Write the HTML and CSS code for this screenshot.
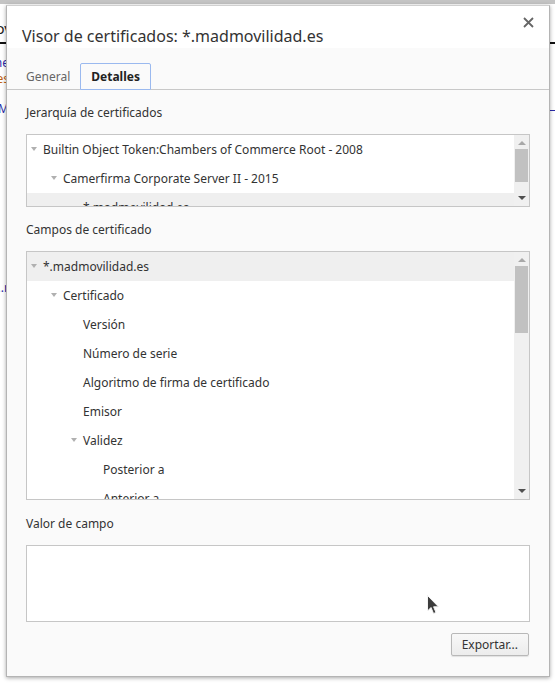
FILE: index.html
```html
<!DOCTYPE html>
<html lang="es">
<head>
    <meta charset="UTF-8">
    <title>Visor de certificados</title>
    <link rel="stylesheet" href="styles.css">
</head>
<body>
    <!-- página de fondo, casi tapada por el diálogo -->
    <div class="page">
        <div class="page-top"></div>
        <div class="page-nav"><span class="nav-left">Nov</span></div>
        <div class="page-side">
            <span class="s-blue l1">me</span>
            <span class="s-orange l2">es</span>
            <span class="s-blue l3">M</span>
            <span class="s-blue l4">..r</span>
            <span class="s-blue l5">:</span>
        </div>
        <div class="page-dash"></div>
    </div>

    <div class="dialog">
        <div class="dialog-header">
            <h1>Visor de certificados: *.madmovilidad.es</h1>
            <button class="close-btn" aria-label="Cerrar">
                <svg width="11" height="11" viewBox="0 0 11 11"><path d="M1 1L10 10M10 1L1 10" stroke="#666" stroke-width="1.8"/></svg>
            </button>
        </div>

        <div class="tabs">
            <div class="tab">General</div>
            <div class="tab active">Detalles</div>
        </div>

        <div class="dialog-body">
            <div class="section-label">Jerarquía de certificados</div>
            <div class="tree tree-small">
                <div class="tree-rows">
                    <div class="row lvl0"><span class="arrow"></span>Builtin Object Token:Chambers of Commerce Root - 2008</div>
                    <div class="row lvl1"><span class="arrow"></span>Camerfirma Corporate Server II - 2015</div>
                    <div class="row lvl2 selected">*.madmovilidad.es</div>
                </div>
                <div class="scrollbar">
                    <span class="sb-up"></span>
                    <div class="sb-track"><div class="sb-thumb thumb-small"></div></div>
                    <span class="sb-down"></span>
                </div>
            </div>

            <div class="section-label">Campos de certificado</div>
            <div class="tree tree-large">
                <div class="tree-rows">
                    <div class="row lvl0 selected"><span class="arrow"></span>*.madmovilidad.es</div>
                    <div class="row lvl1"><span class="arrow"></span>Certificado</div>
                    <div class="row lvl2">Versión</div>
                    <div class="row lvl2">Número de serie</div>
                    <div class="row lvl2">Algoritmo de firma de certificado</div>
                    <div class="row lvl2">Emisor</div>
                    <div class="row lvl2 has-arrow"><span class="arrow"></span>Validez</div>
                    <div class="row lvl3">Posterior a</div>
                    <div class="row lvl3">Anterior a</div>
                </div>
                <div class="scrollbar">
                    <span class="sb-up"></span>
                    <div class="sb-track"><div class="sb-thumb thumb-large"></div></div>
                    <span class="sb-down"></span>
                </div>
            </div>

            <div class="section-label">Valor de campo</div>
            <div class="value-box"></div>

            <div class="actions">
                <button class="export-btn">Exportar...</button>
            </div>
        </div>
    </div>

    <svg class="cursor" width="14" height="22" viewBox="0 0 14 22">
        <path d="M1.5 1.5L1.5 17L5 13.5L7.5 19.5L10 18.5L7.6 12.8L12.5 12.8Z" fill="#3c3c3c" stroke="#f4f4f4" stroke-width="1"/>
    </svg>
</body>
</html>
```

FILE: styles.css
```css
* { margin: 0; padding: 0; box-sizing: border-box; }
body { font-family: "Noto Sans", "Open Sans", sans-serif; font-size: 12px; color: #333; background: #fff; width: 555px; height: 683px; overflow: hidden; position: relative; }

/* fondo */
.page { position: absolute; inset: 0; }
.page-top { height: 4px; background: #c4c4c4; }
.page-nav { height: 40px; border-bottom: 2px solid #111; position: relative; }
.nav-left { position: absolute; left: -16px; top: 14px; font-size: 15px; color: #222; }
.page-side { position: absolute; left: 0; top: 0; width: 6px; height: 683px; overflow: hidden; }
.page-side span { position: absolute; right: -3px; font-size: 12px; white-space: nowrap; }
.s-blue { color: #2a2aa8; }
.s-orange { color: #c06010; }
.l1 { top: 54px; }
.l2 { top: 70px; }
.l3 { top: 100px; }
.l4 { top: 279px; }
.l5 { top: 609px; }
.page-dash { position: absolute; right: 0; top: 110px; width: 5px; border-top: 1px dashed #2a2aa8; }

/* diálogo */
.dialog { position: absolute; left: 6px; top: 5px; width: 544px; height: 672px; background: #fafafa; border: 1px solid #b4b4b4; border-top-color: #d0d0d0; box-shadow: 0 1px 4px rgba(0,0,0,0.35); display: flex; flex-direction: column; }
.dialog-header { height: 42px; background: #fff; display: flex; align-items: flex-start; justify-content: space-between; padding: 0 15px 0 15px; }
.dialog-header h1 { font-size: 16px; font-weight: normal; color: #333; margin-top: 18px; line-height: 24px; }
.close-btn { border: none; background: none; margin-top: 11px; width: 11px; height: 11px; display: flex; }

.tabs { display: flex; padding: 15px 0 0 9px; border-bottom: 1px solid #c8c8c8; }
.tab { height: 26px; padding: 0 9px; line-height: 26px; color: #666; font-size: 12px; border: 1px solid transparent; border-bottom: none; }
.tab.active { color: #222; font-weight: bold; padding: 0 10px; border: 1px solid #9ab9ef; border-radius: 2px 2px 0 0; background: #fafafa; margin-bottom: -1px; height: 27px; }

.dialog-body { padding: 0 19px 0 19px; display: flex; flex-direction: column; }
.section-label { line-height: 20px; margin: 13px 0 11px; }
.tree-small + .section-label { margin-top: 13px; }
.tree-large + .section-label { margin-top: 14px; }

.tree { background: #fff; border: 1px solid #c6c6c6; display: flex; overflow: hidden; }
.tree-small { height: 73px; }
.tree-large { height: 249px; }
.tree-rows { flex: 1; overflow: hidden; }
.row { height: 29px; line-height: 28px; white-space: nowrap; display: flex; align-items: center; }
.row.selected { background: #efefef; }
.lvl0 { padding-left: 4px; }
.lvl1 { padding-left: 24px; }
.lvl2 { padding-left: 56px; }
.lvl2.has-arrow { padding-left: 44px; }
.lvl3 { padding-left: 76px; }
.arrow { width: 0; height: 0; border-left: 3.5px solid transparent; border-right: 3.5px solid transparent; border-top: 4px solid #b0b0b0; margin-right: 6px; margin-bottom: 1px; }

.scrollbar { width: 15px; background: #f0f0f0; display: flex; flex-direction: column; align-items: center; padding: 0 1px; }
.sb-up { width: 0; height: 0; border-left: 4px solid transparent; border-right: 4px solid transparent; border-bottom: 4px solid #a8a8a8; margin: 6px 0 4px; }
.sb-down { width: 0; height: 0; border-left: 4px solid transparent; border-right: 4px solid transparent; border-top: 4px solid #505050; margin: 4px 0 6px; }
.sb-track { flex: 1; width: 100%; }
.sb-thumb { background: #c1c1c1; width: 100%; }
.thumb-small { height: 33px; }
.thumb-large { height: 67px; }

.value-box { height: 77px; background: #fff; border: 1px solid #c6c6c6; }
.actions { display: flex; justify-content: flex-end; margin-top: 11px; padding-right: 1px; }
.export-btn { font-family: inherit; font-size: 12px; color: #333; height: 23px; padding: 0 10px; border: 1px solid #b8b8b8; border-radius: 2px; background: linear-gradient(#f8f8f8, #ececec); box-shadow: 0 1px 1px rgba(0,0,0,0.1); }

.cursor { position: absolute; left: 426px; top: 594px; }
```
